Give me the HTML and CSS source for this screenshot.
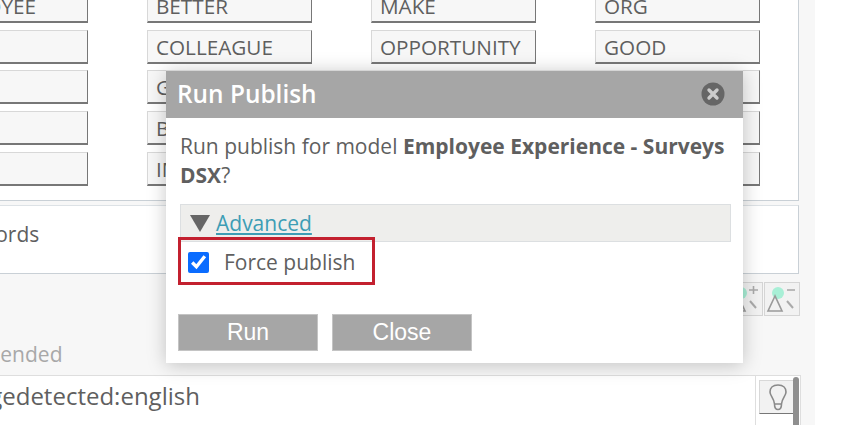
FILE: index.html
```html
<!DOCTYPE html>
<html lang="en">
<head>
  <meta charset="UTF-8">
  <title>Run Publish</title>
  <link rel="stylesheet" href="styles.css">
</head>
<body>
  <div class="page">
    <div class="chips-panel">
      <div class="chip">EMPLOYEE</div>
      <div class="chip">BETTER</div>
      <div class="chip">MAKE</div>
      <div class="chip">ORG</div>
      <div class="chip"></div>
      <div class="chip">COLLEAGUE</div>
      <div class="chip">OPPORTUNITY</div>
      <div class="chip">GOOD</div>
      <div class="chip"></div>
      <div class="chip">GREAT</div>
      <div class="chip"></div>
      <div class="chip"></div>
      <div class="chip"></div>
      <div class="chip">BEST</div>
      <div class="chip"></div>
      <div class="chip"></div>
      <div class="chip"></div>
      <div class="chip">IMPROVE</div>
      <div class="chip"></div>
      <div class="chip"></div>
    </div>

    <div class="words-panel">Stop words</div>

    <div class="toolbar">
      <button class="zoom-btn">
        <svg width="34" height="32" viewBox="0 0 34 32">
          <circle cx="13" cy="10" r="6" fill="#a8efd6"/>
          <path d="M10 13L3 28H17Z" fill="none" stroke="#9a9a9a" stroke-width="1.6"/>
          <path d="M22 18L28 25" stroke="#aaa" stroke-width="2"/>
          <path d="M21 7H30M25.500 3V11" stroke="#aaa" stroke-width="1.6"/>
        </svg>
      </button>
      <button class="zoom-btn">
        <svg width="34" height="32" viewBox="0 0 34 32">
          <circle cx="13" cy="10" r="6" fill="#a8efd6"/>
          <path d="M10 13L3 28H17Z" fill="none" stroke="#9a9a9a" stroke-width="1.6"/>
          <path d="M22 18L28 25" stroke="#aaa" stroke-width="2"/>
          <path d="M22 7H30" stroke="#aaa" stroke-width="1.6"/>
        </svg>
      </button>
    </div>

    <div class="field-label">Recommended</div>

    <div class="query-box">
      <div class="query-text">languagedetected:english</div>
      <div class="query-side">
        <button class="bulb-btn">
          <svg width="20" height="30" viewBox="0 0 20 30">
            <path d="M10 3C4.500 3 2 6.500 2 10C2 14 6 16 6.500 22H13.500C14 16 18 14 18 10C18 6.500 15.500 3 10 3ZM6.500 22C6.500 26 8 27.500 10 27.500C12 27.500 13.500 26 13.500 22" fill="none" stroke="#8a8a8a" stroke-width="1.6"/>
          </svg>
        </button>
        <div class="scrollbar"></div>
      </div>
    </div>
  </div>

  <div class="modal">
    <div class="modal-title">
      <span>Run Publish</span>
      <svg class="close-icon" width="24" height="24" viewBox="0 0 24 24">
        <circle cx="12" cy="12" r="11.500" fill="#666"/>
        <path d="M8 8L16 16M16 8L8 16" stroke="#ccc" stroke-width="3.400" stroke-linecap="round"/>
      </svg>
    </div>
    <div class="modal-body">
      <p class="modal-msg">Run publish for model <b>Employee Experience - Surveys DSX</b>?</p>
      <div class="advanced-bar">
        <span class="arrow"></span>
        <a href="#" class="advanced-link">Advanced</a>
      </div>
      <label class="force-row">
        <input type="checkbox" class="force-check" checked>
        <span>Force publish</span>
      </label>
      <div class="modal-btns">
        <button class="modal-btn">Run</button>
        <button class="modal-btn">Close</button>
      </div>
    </div>
  </div>
</body>
</html>
```

FILE: styles.css
```css
html, body {
  margin: 0;
  height: 425px;
  overflow: hidden;
  background: #fff;
}

body {
  position: relative;
  font-family: "Open Sans", sans-serif;
  color: #5f5f5f;
}

.page {
  width: 905px;
  height: 425px;
  margin-left: -90px;
  background: #f7f7f7;
  overflow: hidden;
}

.chips-panel {
  width: 889px;
  height: 212px;
  margin-top: -11px;
  padding-left: 13px;
  box-sizing: border-box;
  display: grid;
  grid-template-columns: repeat(4, 165px);
  grid-auto-rows: 34px;
  column-gap: 59px;
  row-gap: 6.700px;
  background: #fff;
  border-right: 1px solid #c9d0d6;
  border-bottom: 1px solid #c9d0d6;
}

.chip {
  box-sizing: border-box;
  padding-left: 8px;
  font-size: 20.700px;
  line-height: 32px;
  background: #f7f7f7;
  border: 1px solid #d8d8d8;
  border-right-color: #777;
  border-bottom: 2px solid #777;
}

.words-panel {
  width: 889px;
  height: 69px;
  box-sizing: border-box;
  margin-top: 4px;
  padding: 14px 0 0 19px;
  font-size: 21px;
  background: #fff;
  border-top: 1px solid #dde2e6;
  border-right: 1px solid #c9d0d6;
  border-bottom: 1px solid #c9d0d6;
}

.toolbar {
  width: 890px;
  margin-top: 8px;
  display: flex;
  justify-content: flex-end;
  gap: 1px;
}

.zoom-btn {
  width: 36px;
  height: 34px;
  padding: 0;
  background: #f2f2f2;
  border: 1px solid #d5d5d5;
}

.field-label {
  margin-top: 25px;
  padding-left: 4px;
  font-size: 21px;
  line-height: 27px;
  color: #a8a8a8;
}

.query-box {
  width: 891px;
  height: 60px;
  margin-top: 7px;
  display: flex;
  background: #fff;
  border-top: 1px solid #dedede;
}

.query-text {
  flex: 1;
  padding: 4px 0 0 4px;
  font-size: 24px;
  line-height: 32px;
}

.query-side {
  position: relative;
  width: 46px;
  box-sizing: border-box;
  padding: 4px 0 0 3px;
  background: #fff;
  border-left: 1px solid #dedede;
  border-right: 1px solid #dedede;
}

.bulb-btn {
  display: flex;
  align-items: center;
  justify-content: center;
  width: 37px;
  height: 34px;
  padding: 0;
  background: #f2f2f2;
  border: 1px solid #d8d8d8;
  border-right-color: #777;
  border-bottom: 1px solid #777;
}

.scrollbar {
  position: absolute;
  top: 1px;
  right: 1px;
  width: 6px;
  height: 60px;
  border-radius: 3px;
  background: #8f8f8f;
}

/* dialog sits over the page */
.modal {
  position: absolute;
  left: 166px;
  top: 70px;
  width: 577px;
  height: 293px;
  background: #fff;
  box-shadow: 0 2px 18px rgba(0, 0, 0, 0.22);
}

.modal-title {
  display: flex;
  align-items: center;
  justify-content: space-between;
  height: 48px;
  padding: 0 18px 2px 11px;
  font-size: 24.400px;
  font-weight: 600;
  color: #fff;
  background: #a6a6a6;
  border-top: 1px solid #d5d5d5;
  box-sizing: border-box;
}

.close-icon {
  display: block;
}

.modal-body {
  padding: 14px 12px 0;
}

.modal-msg {
  margin: 0 0 14px 2px;
  font-size: 21px;
  line-height: 29px;
}

.advanced-bar {
  display: flex;
  align-items: center;
  height: 38px;
  box-sizing: border-box;
  margin-left: 2px;
  width: 551px;
  padding-left: 9px;
  background: #eeeeec;
  border: 1px solid #dcdfe1;
}

.arrow {
  width: 0;
  height: 0;
  margin-right: 6px;
  border-left: 10px solid transparent;
  border-right: 10px solid transparent;
  border-top: 17px solid #666;
}

.advanced-link {
  font-size: 21px;
  color: #3d9db5;
}

.force-row {
  display: flex;
  align-items: center;
  width: 197px;
  height: 48px;
  margin-top: -5px;
  box-sizing: border-box;
  padding: 2px 0 0 7px;
  font-size: 21px;
  border: 3px solid #c3202f;
  position: relative;
}

.force-check {
  width: 21px;
  height: 21px;
  margin: 0 15px 0 0;
  accent-color: #0a6cff;
}

.modal-btns {
  display: flex;
  gap: 14px;
  margin-top: 29px;
}

.modal-btn {
  width: 140px;
  height: 37px;
  padding: 0;
  font-family: "Liberation Sans", sans-serif;
  font-size: 23px;
  color: #fff;
  background: #a6a6a6;
  border: 1px solid #c4c4c4;
}
```
